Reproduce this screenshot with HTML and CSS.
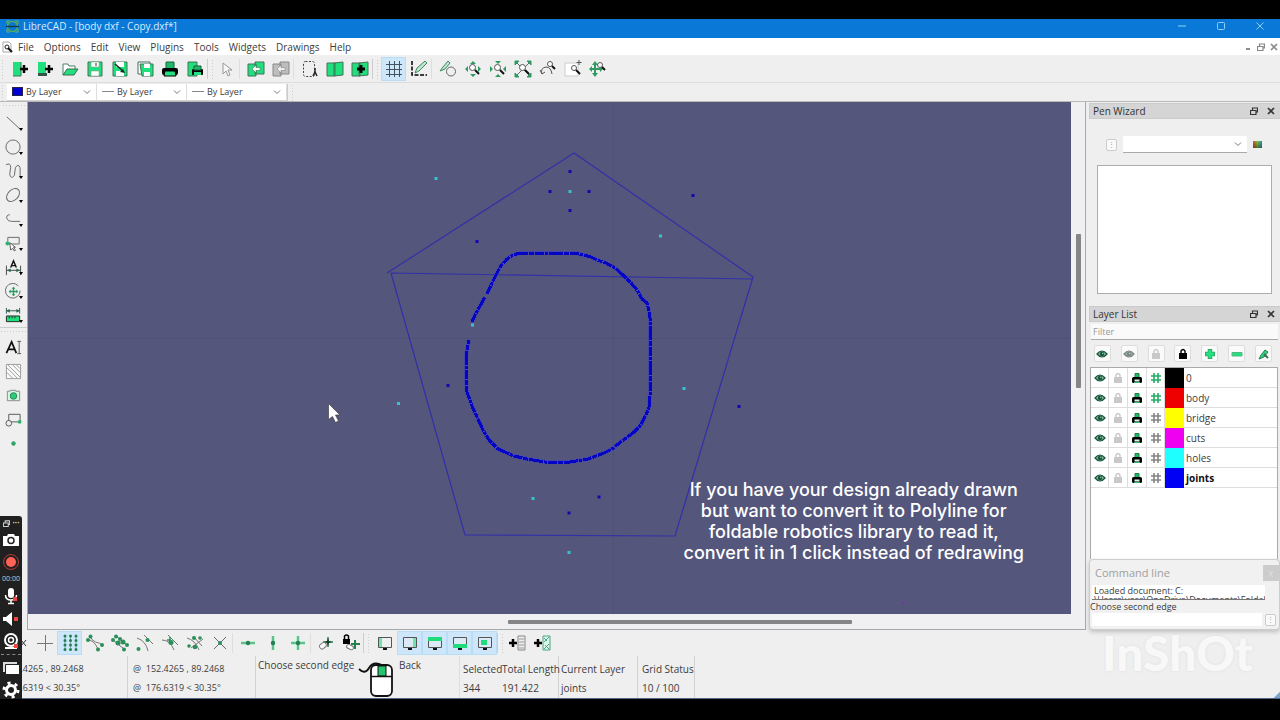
FILE: index.html
```html
<!DOCTYPE html>
<html lang="en">
<head>
<meta charset="utf-8">
<title>LibreCAD - [body dxf - Copy.dxf*]</title>
<link rel="stylesheet" href="styles.css">
</head>
<body>
<svg class="sprites" aria-hidden="true">
  <defs>
    <symbol id="new" viewBox="0 0 18 18"><path d="M2 2h8v14H2z" fill="#1fe07c"/><path d="M10 2v14H2" fill="none" stroke="#47705a"/><path d="M9 9h8M13 5v8" stroke="#000" stroke-width="2.500"/></symbol>
    <symbol id="newt" viewBox="0 0 18 18"><path d="M2 2h8v14H2z" fill="#1fe07c"/><path d="M2 13h9v3H2z" fill="#35544a"/><path d="M9 9h8M13 5v8" stroke="#000" stroke-width="2.500"/></symbol>
    <symbol id="open" viewBox="0 0 18 18"><path d="M2 15V4h5l1 2h6v3" fill="#fff" stroke="#4f7f67"/><path d="M2 15l4-6h11l-4 6z" fill="#1fe07c" stroke="#3c6a53"/></symbol>
    <symbol id="save" viewBox="0 0 18 18"><path d="M2 2h14v14H2z" fill="#1fe07c" stroke="#47705a"/><path d="M5 2h8v5H5zM5 11h8v5H5z" fill="#fff" stroke="#7fa893" stroke-width=".6"/><path d="M10 3v3" stroke="#333"/></symbol>
    <symbol id="saveas" viewBox="0 0 18 18"><path d="M2 2h14v14H2z" fill="#1fe07c" stroke="#47705a"/><path d="M5 2h8v5H5zM5 11h8v5H5z" fill="#fff"/><path d="M4 4l8 7" stroke="#222" stroke-width="1.500"/><path d="M12 9l2 4-5-1z" fill="#222"/></symbol>
    <symbol id="saveall" viewBox="0 0 18 18"><path d="M2 2h12v12H2z" fill="#fff" stroke="#47705a"/><path d="M4 4h13v12H6z" fill="#1fe07c" stroke="#47705a"/><path d="M8 4h6v4H8zM8 12h6v4H8z" fill="#fff"/></symbol>
    <symbol id="print" viewBox="0 0 18 18"><path d="M5 2h8v7H5z" fill="#1fb868" stroke="#17623b"/><rect x="1" y="8" width="16" height="7" rx="2"/><path d="M4 11h10l1 5H3z" fill="#25e082" stroke="#000"/></symbol>
    <symbol id="preview" viewBox="0 0 18 18"><path d="M2 2h9v14H2z" fill="#1fe07c" stroke="#47705a"/><rect x="6" y="9" width="11" height="6" rx="1"/><path d="M8 6h7v4H8z" fill="#1fb868" stroke="#17623b"/><path d="M8 12h7v3H8z" fill="#25e082"/></symbol>
    <symbol id="arrow" viewBox="0 0 18 18"><path d="M5 3v11l3-3 2 5 2-1-2-5h4z" fill="#f7f7f7" stroke="#999"/></symbol>
    <symbol id="copyl" viewBox="0 0 18 18"><path d="M1 4h8v12H1zM8 2h9v12H8z" fill="#1fe07c" stroke="#47705a"/><path d="M5 9l4-4v2.500h4v3H9V13z" fill="#fff" stroke="#47705a" stroke-width=".6"/></symbol>
    <symbol id="copyg" viewBox="0 0 18 18"><path d="M1 4h8v12H1zM8 2h9v12H8z" fill="#bdbdbd" stroke="#888"/><path d="M5 9l4-4v2.500h4v3H9V13z" fill="#eee" stroke="#888" stroke-width=".6"/></symbol>
    <symbol id="cut" viewBox="0 0 18 18"><rect x="2.500" y="1.500" width="11" height="15" rx="2" fill="none" stroke="#444" stroke-dasharray="2 1.500"/><path d="M14 8v5M12 16l2-4 2 4" stroke="#222" stroke-width="1.500" fill="none"/></symbol>
    <symbol id="copy" viewBox="0 0 18 18"><path d="M1 3h8v13H1zM8 3l9-1v13l-9 1z" fill="#1fe07c" stroke="#47705a"/></symbol>
    <symbol id="paste" viewBox="0 0 18 18"><path d="M1 3h8v13H1zM8 3l9-1v13l-9 1z" fill="#1fe07c" stroke="#47705a"/><path d="M6 9h8M10 5v8" stroke="#000" stroke-width="3"/></symbol>
    <symbol id="grid" viewBox="0 0 18 18"><path d="M1 4.500h16M1 9.500h16M1 14.500h16M4.500 1v16M9.500 1v16M14.500 1v16" stroke="#43525e" fill="none"/></symbol>
    <symbol id="draft" viewBox="0 0 18 18"><path d="M2 1v14h15" fill="none" stroke="#000" stroke-width="1.500" stroke-dasharray="4 1.500"/><path d="M5 13l2-5 8-7 2 2-8 8z" fill="#bfe5cf" stroke="#3e8a62"/></symbol>
    <symbol id="redraw" viewBox="0 0 18 18"><circle cx="12" cy="11.500" r="4.500" fill="none" stroke="#666"/><path d="M1 11l3-4 5-6 2 2-5 6z" fill="#bfe5cf" stroke="#3e8a62"/></symbol>
    <symbol id="glass" viewBox="0 0 18 18"><circle cx="8.500" cy="7.500" r="3" fill="#fff" stroke="#555"/><path d="M11 10l4 4" stroke="#111" stroke-width="2"/></symbol>
    <symbol id="zin" viewBox="0 0 18 18"><path d="M9 1l3 3H6zM9 17l3-3H6zM1 9l3-3v6zM17 9l-3-3v6z" fill="#2d9b62"/><use href="#glass"/></symbol>
    <symbol id="zout" viewBox="0 0 18 18"><path d="M9 4l3-3H6zM9 14l3 3H6zM4 9L1 6v6zM14 9l3-3v6z" fill="#2d9b62"/><use href="#glass"/></symbol>
    <symbol id="zauto" viewBox="0 0 18 18"><path d="M3 3l12 12M15 3L3 15" stroke="#667"/><path d="M1 1h4L1 5zM17 1h-4l4 4zM1 17h4l-4-4zM17 17h-4l4-4z" fill="#2d9b62" stroke="#2d9b62"/><use href="#glass"/></symbol>
    <symbol id="zprev" viewBox="0 0 18 18"><path d="M3 14q-2-6 4-7 5 0 6 7M1 10l2 4 3-2" fill="none" stroke="#555"/><circle cx="11" cy="4" r="2.500" fill="#fff" stroke="#555"/><path d="M13 6l3 3" stroke="#111" stroke-width="2"/></symbol>
    <symbol id="zwin" viewBox="0 0 18 18"><path d="M1 3h13v13H1z" fill="#fff" stroke="#ccc"/><path d="M15 0v5M12.500 2.500h5" stroke="#555"/><circle cx="10" cy="8" r="2.500" fill="#fff" stroke="#555"/><path d="M12 10l4 4" stroke="#111" stroke-width="2"/></symbol>
    <symbol id="zpan" viewBox="0 0 18 18"><path d="M6 3v12M1 9h12" stroke="#2d9b62" stroke-width="2"/><path d="M6 1l3 4H3zM6 17l3-4H3zM0 9l3-3v6zM14 9l-3-3v6z" fill="#2d9b62"/><circle cx="11" cy="5" r="2.500" fill="#fff" stroke="#555"/><path d="M13 7l3 3" stroke="#111" stroke-width="2"/></symbol>
    <symbol id="line" viewBox="0 0 18 18"><path d="M2 2l14 13" stroke="#666"/></symbol>
    <symbol id="circle" viewBox="0 0 18 18"><circle cx="8.500" cy="8.500" r="7.500" fill="none" stroke="#666"/></symbol>
    <symbol id="curve" viewBox="0 0 18 18"><path d="M1 2q5-3 5 3l-1 7q1 6 5 1L11 5q3-5 5 0v10" fill="none" stroke="#666"/></symbol>
    <symbol id="ellipse" viewBox="0 0 18 18"><ellipse cx="8.500" cy="8.500" rx="8" ry="5.500" transform="rotate(-45 8.500 8.500)" fill="none" stroke="#666"/></symbol>
    <symbol id="poly" viewBox="0 0 18 18"><path d="M5 4q-4 0-3 4 1 3 5 3h9" fill="none" stroke="#666"/></symbol>
    <symbol id="sel" viewBox="0 0 18 18"><path d="M3 2.500h12v7H3z" fill="none" stroke="#666"/><circle cx="2.500" cy="9" r="2" fill="#2bb26c"/><path d="M5 8l1 8 2-2 2 3 1-1-2-3h2z" fill="#fff" stroke="#555"/></symbol>
    <symbol id="dim" viewBox="0 0 18 18"><path d="M1.500 7v10M16.500 7v10M2 12h14" stroke="#444"/><path d="M2 12l4-2v4zM16 12l-4-2v4z" fill="#2b6b4b"/><path d="M6 9l3-7 3 7M7 7h4" fill="none" stroke="#111" stroke-width="1.500"/></symbol>
    <symbol id="mod" viewBox="0 0 18 18"><path d="M14 3a7.800 7.800 0 1 0 2 5" fill="none" stroke="#666"/><path d="M9 5v8M5 9h8" stroke="#2d9b62" stroke-width="1.500"/><path d="M9 4l2 2H7zM9 14l2-2H7zM4 9l2-2v4zM14 9l-2-2v4z" fill="#2d9b62"/></symbol>
    <symbol id="meas" viewBox="0 0 18 18"><path d="M1.500 1v6M15.500 1v6M2 4h13" stroke="#355"/><path d="M1 4l4-2v4zM16 4l-4-2v4z" fill="#2b6b4b"/><path d="M1.500 9.500h14v6h-14z" fill="#1fe07c" stroke="#222"/><path d="M4.500 10v2M7.500 10v2M10.500 10v2" stroke="#222"/></symbol>
    <symbol id="text" viewBox="0 0 18 18"><path d="M1.500 15L7 3l5 12M4 11h6" fill="none" stroke="#111" stroke-width="1.800"/><path d="M13 2.500h4M13 15.500h4M15 2.500v13" stroke="#555"/></symbol>
    <symbol id="hatch" viewBox="0 0 18 18"><path d="M1.500 1.500h15v15h-15z" fill="#fafafa" stroke="#999"/><path d="M2 10l6 6M2 5l11 11M3 2l13 13M8 2l8 8M12 2l4 4" stroke="#999"/></symbol>
    <symbol id="image" viewBox="0 0 18 18"><path d="M2.500 4.500h3v-1h6v1h4v10h-13z" fill="#d7f7e5" stroke="#888"/><circle cx="9" cy="9.500" r="3.500" fill="#25d079" stroke="#387b59"/></symbol>
    <symbol id="block" viewBox="0 0 18 18"><path d="M4 3.500h12v8H4z" fill="none" stroke="#555"/><circle cx="4" cy="13" r="3" fill="#eee" stroke="#555"/><circle cx="15.500" cy="11.500" r="2" fill="#2bb26c"/></symbol>
    <symbol id="point" viewBox="0 0 18 18"><circle cx="9" cy="9" r="2" fill="#2bb26c" stroke="#387b59" stroke-width=".6"/></symbol>
    <symbol id="x" viewBox="0 0 18 18"><path d="M10 6l5 6M15 6l-5 6" stroke="#333"/></symbol>
    <symbol id="free" viewBox="0 0 18 18"><path d="M1 9.500h16M9.500 1v16" stroke="#777"/></symbol>
    <symbol id="sgrid" viewBox="0 0 18 18"><g fill="none" stroke="#257f53" stroke-width="3" stroke-dasharray="0 4.500" stroke-linecap="round"><path d="M4 2v14M9.500 2v14M15 2v14"/></g><path d="M4 2v14M9.500 2v14M15 2v14" stroke="#257f53" stroke-width=".5"/></symbol>
    <symbol id="send" viewBox="0 0 18 18"><path d="M4.500 2.500q1 4 5 5.500 5 1 6.500 3M2 6q6 0 10 9" stroke="#777" fill="none"/><g fill="#2b8f5a"><circle cx="4.500" cy="2.500" r="2"/><circle cx="2" cy="6" r="2"/><circle cx="16" cy="11" r="2"/><circle cx="12" cy="15.500" r="2"/></g></symbol>
    <symbol id="sent" viewBox="0 0 18 18"><path d="M2 6l11 9M5 2l11 9" stroke="#667" fill="none"/><g fill="#2b8f5a"><circle cx="5" cy="2.500" r="2"/><circle cx="2" cy="6" r="2"/><circle cx="9" cy="5" r="2"/><circle cx="7" cy="9" r="2.500"/><circle cx="12" cy="8" r="2.500"/><circle cx="16" cy="11" r="2"/><circle cx="13" cy="15.500" r="2"/></g></symbol>
    <symbol id="scen" viewBox="0 0 18 18"><path d="M1 4q9 3 11 13M8 1l9 9" stroke="#777" fill="none"/><circle cx="11.500" cy="6" r="2" fill="#2b8f5a"/><circle cx="2.500" cy="15" r="2" fill="#2b8f5a"/></symbol>
    <symbol id="smid" viewBox="0 0 18 18"><path d="M1 6q8 0 12 10M7 1l10 10" stroke="#777" fill="none"/><circle cx="10" cy="8.500" r="2.500" fill="#2b8f5a"/><path d="M9 3v4M6 6h4" stroke="#2b8f5a" stroke-width="1.500"/></symbol>
    <symbol id="sdist" viewBox="0 0 18 18"><path d="M1 4q8 2 12 12M5 14L17 5M7 2l9 10" stroke="#777" fill="none"/><g fill="#2b8f5a"><circle cx="8" cy="4" r="2"/><circle cx="14" cy="4" r="1.800"/><circle cx="3" cy="12" r="1.800"/><circle cx="9" cy="13" r="2.300"/></g></symbol>
    <symbol id="sint" viewBox="0 0 18 18"><path d="M3 3l12 12M15 3L3 15" stroke="#667"/><circle cx="9" cy="9" r="2" fill="#2b8f5a"/></symbol>
    <symbol id="rh" viewBox="0 0 18 18"><path d="M2 9h14" stroke="#b4f3cf" stroke-width="4"/><path d="M2 9h14" stroke="#257f53"/><circle cx="9" cy="9" r="2.200" fill="#257f53"/></symbol>
    <symbol id="rv" viewBox="0 0 18 18"><path d="M9 2v14" stroke="#b4f3cf" stroke-width="4"/><path d="M9 2v14" stroke="#257f53"/><circle cx="9" cy="9" r="2.200" fill="#257f53"/></symbol>
    <symbol id="ro" viewBox="0 0 18 18"><path d="M9 2v14M2 9h14" stroke="#b4f3cf" stroke-width="4"/><path d="M9 2v14M2 9h14" stroke="#257f53"/><circle cx="9" cy="9" r="2.200" fill="#257f53"/></symbol>
    <symbol id="rel" viewBox="0 0 18 18"><path d="M11 3v10M6 8h10" stroke="#257f53" stroke-width="1.500"/><path d="M11 4l1 3 3 1-3 1-1 3-1-3-3-1 3-1z" fill="#173f2b"/><rect x="2" y="9" width="7" height="5" rx="2" transform="rotate(-38 6 11)" fill="#fff" stroke="#777"/></symbol>
    <symbol id="rlock" viewBox="0 0 18 18"><path d="M1 5h7v5H1z"/><path d="M2.500 5V2q2-2 4 0v3" fill="none" stroke="#000" stroke-width="1.500"/><path d="M13 6v9M9 10h9" stroke="#257f53" stroke-width="2"/><rect x="5" y="11" width="7" height="4" rx="2" transform="rotate(25 8 12)" fill="#fff" stroke="#777"/></symbol>
    <symbol id="mon" viewBox="0 0 18 18"><path d="M2.500 3.500h13v10h-13z" fill="#f0f0f0" fill-opacity=".4" stroke="#555"/><path d="M7 14h4v2H7z" fill="#111"/></symbol>
    <symbol id="list" viewBox="0 0 18 18"><path d="M10 2h7v14h-7z" fill="#eee" stroke="#888"/><path d="M11 5h5M11 8h5M11 11h5M11 14h5" stroke="#999"/><path d="M1 9h8M5 5v8" stroke="#000" stroke-width="2.500"/></symbol>
    <symbol id="list2" viewBox="0 0 18 18"><path d="M10 2h7v14h-7z" fill="#d9f8e7" stroke="#55a07a"/><path d="M11 8l5-5M11 15l5-5M11 4l3 3M12 11l4 4" stroke="#4a9" fill="none"/><path d="M1 9h8M5 5v8" stroke="#000" stroke-width="2.500"/></symbol>
    <symbol id="eye" viewBox="0 0 12 12"><path d="M1 6q5-6 10 0-5 6-10 0z" fill="#7fb79a" stroke="currentColor" stroke-width="1.200"/><circle cx="6" cy="6" r="2.200" fill="currentColor"/><circle cx="6.800" cy="5.300" r=".6" fill="#dfe"/></symbol>
    <symbol id="lock" viewBox="0 0 12 12"><path d="M2 5h8v6H2z" fill="currentColor"/><path d="M4 5V3q2-3 4 0v2" fill="none" stroke="currentColor" stroke-width="1.400"/></symbol>
    <symbol id="lprint" viewBox="0 0 12 12"><path d="M4 1.500h4V6H4z" fill="#1fb868" stroke="#17833f"/><rect x="1" y="5" width="10" height="6" rx="1.500"/><path d="M3.500 7.500h5v2h-5z" fill="#d9f5e5"/><path d="M3 10h6v1H3z" fill="#25c070"/></symbol>
    <symbol id="hash" viewBox="0 0 12 12"><path d="M4 1v10M8 1v10M1 4h10M1 8h10" stroke="currentColor" stroke-width="1.600"/></symbol>
    <symbol id="plus" viewBox="0 0 12 12"><path d="M6 1v10M1 6h10" stroke="#2fa566" stroke-width="4.500"/><path d="M6 2v8M2 6h8" stroke="#25e082" stroke-width="3"/></symbol>
    <symbol id="minus" viewBox="0 0 12 12"><path d="M1 4.500h10v3.500H1z" fill="#25e082" stroke="#55b884"/></symbol>
    <symbol id="edit" viewBox="0 0 12 12"><path d="M1 11l2-4 4-5 3 2-4 5z" fill="#2fd07e" stroke="#2b7f53"/><path d="M6 6l4 4" stroke="#3b6e53" stroke-width="2"/></symbol>
    <symbol id="chev" viewBox="0 0 8 8"><path d="M1 2.500l3 3 3-3" fill="none" stroke="#777"/></symbol>
    <symbol id="restore" viewBox="0 0 8 8"><path d="M2.500 3V1h5v4H6M.5 3.500H6v4H.5z" fill="none" stroke="currentColor" stroke-width="1.200"/></symbol>
    <symbol id="close" viewBox="0 0 8 8"><path d="M1 1l6 6M7 1L1 7" stroke="currentColor" stroke-width="1.700"/></symbol>
  </defs>
</svg>

<div class="window">
  <header class="titlebar">
    <svg class="logo" viewBox="0 0 14 14"><circle cx="7" cy="7" r="5.500" fill="none" stroke="#5fae4c" stroke-width="1.500"/><path d="M0 7h14" stroke="#143d3a" stroke-width="1.500"/><path d="M1 4V1h3M10 1h3v3M1 10v3h3M10 13h3v-3" stroke="#74bd5a" fill="none"/></svg>
    <h1>LibreCAD - [body dxf - Copy.dxf*]</h1>
    <div class="winctl">
      <button aria-label="Minimize"><svg viewBox="0 0 10 10"><path d="M1 5h8"/></svg></button>
      <button aria-label="Maximize"><svg viewBox="0 0 10 10"><rect x="1.500" y="1.500" width="7" height="7" rx="1"/></svg></button>
      <button aria-label="Close"><svg viewBox="0 0 10 10"><path d="M1.500 1.500l7 7M8.500 1.500l-7 7"/></svg></button>
    </div>
  </header>

  <nav class="menubar">
    <svg class="doc" viewBox="0 0 12 12"><path d="M1 1h6l2 2v8H1z" fill="#fff" stroke="#aaa"/><circle cx="5" cy="6" r="2" fill="none" stroke="#222"/><path d="M6 7l4 4" stroke="#111" stroke-width="2"/></svg>
    <button>File</button><button>Options</button><button>Edit</button><button>View</button><button>Plugins</button><button>Tools</button><button>Widgets</button><button>Drawings</button><button>Help</button>
    <div class="docctl">
      <button aria-label="Minimize drawing"><svg viewBox="0 0 8 8"><path d="M2 6h4" stroke="#666" stroke-width="1.500"/></svg></button>
      <button aria-label="Restore drawing"><svg><use href="#restore"/></svg></button>
      <button aria-label="Close drawing"><svg><use href="#close"/></svg></button>
    </div>
  </nav>

  <div class="toolbar top">
    <i class="grip"></i>
    <button aria-label="New"><svg><use href="#new"/></svg></button>
    <button aria-label="New from template"><svg><use href="#newt"/></svg></button>
    <button aria-label="Open"><svg><use href="#open"/></svg></button>
    <button aria-label="Save"><svg><use href="#save"/></svg></button>
    <button aria-label="Save as"><svg><use href="#saveas"/></svg></button>
    <button aria-label="Save all"><svg><use href="#saveall"/></svg></button>
    <button aria-label="Print"><svg><use href="#print"/></svg></button>
    <button aria-label="Print preview"><svg><use href="#preview"/></svg></button>
    <i class="grip edge"></i>
    <button aria-label="Select"><svg><use href="#arrow"/></svg></button>
    <i class="sep"></i>
    <button aria-label="Undo"><svg><use href="#copyl"/></svg></button>
    <button aria-label="Redo"><svg><use href="#copyg"/></svg></button>
    <i class="sep"></i>
    <button aria-label="Cut"><svg><use href="#cut"/></svg></button>
    <button aria-label="Copy"><svg><use href="#copy"/></svg></button>
    <button aria-label="Paste"><svg><use href="#paste"/></svg></button>
    <i class="grip wide edge"></i>
    <button class="on" aria-label="Grid"><svg><use href="#grid"/></svg></button>
    <button aria-label="Draft"><svg><use href="#draft"/></svg></button>
    <i class="sep"></i>
    <button aria-label="Redraw"><svg><use href="#redraw"/></svg></button>
    <button aria-label="Zoom in"><svg><use href="#zin"/></svg></button>
    <button aria-label="Zoom out"><svg><use href="#zout"/></svg></button>
    <button aria-label="Auto zoom"><svg><use href="#zauto"/></svg></button>
    <button aria-label="Previous view"><svg><use href="#zprev"/></svg></button>
    <button aria-label="Window zoom"><svg><use href="#zwin"/></svg></button>
    <button aria-label="Zoom panning"><svg><use href="#zpan"/></svg></button>
  </div>

  <div class="penbar">
    <i class="grip"></i>
    <div class="combo"><i class="swatch"></i><select aria-label="Line color"><option>By Layer</option></select><svg><use href="#chev"/></svg></div>
    <div class="combo"><i class="rule"></i><select aria-label="Line width"><option>By Layer</option></select><svg><use href="#chev"/></svg></div>
    <div class="combo last"><i class="rule"></i><select aria-label="Line type"><option>By Layer</option></select><svg><use href="#chev"/></svg></div>
    <i class="grip edge"></i>
  </div>

  <main class="work">
    <div class="sidebar">
      <i class="hgrip"></i>
      <button class="more" aria-label="Line"><svg><use href="#line"/></svg></button>
      <button class="more" aria-label="Circle"><svg><use href="#circle"/></svg></button>
      <button class="more" aria-label="Curve"><svg><use href="#curve"/></svg></button>
      <button class="more" aria-label="Ellipse"><svg><use href="#ellipse"/></svg></button>
      <button class="more" aria-label="Polyline"><svg><use href="#poly"/></svg></button>
      <button class="more" aria-label="Select tools"><svg><use href="#sel"/></svg></button>
      <button class="more" aria-label="Dimension"><svg><use href="#dim"/></svg></button>
      <button class="more" aria-label="Modify"><svg><use href="#mod"/></svg></button>
      <button class="more" aria-label="Info"><svg><use href="#meas"/></svg></button>
      <i class="hgrip second"></i>
      <button aria-label="Text"><svg><use href="#text"/></svg></button>
      <button aria-label="Hatch"><svg><use href="#hatch"/></svg></button>
      <button aria-label="Image"><svg><use href="#image"/></svg></button>
      <button aria-label="Block"><svg><use href="#block"/></svg></button>
      <button aria-label="Point"><svg><use href="#point"/></svg></button>
    </div>

    <section class="viewport">
      <div class="canvas">
        <svg class="drawing" viewBox="28 102 1043 512" preserveAspectRatio="xMidYMid slice">
          <defs><path id="ring" d="M472 322L475 315L485 297M487 294L493 281L500 267L507 259L513 255L520 253H575L584 255L591 257L597 260L606 263L615 268L623 275L631 283L637 290L642 299L647 303L649 311L650 318V395L649 407L646 415L640 426L633 433L622 441L612 449L604 453L588 459L570 462H545L527 459L514 456L498 449L489 440L483 430L477 417L472 406L467 392L466 380V355L469 340"/></defs>
          <path d="M613.500 102v512M28 338.500h1043" stroke="#505178" fill="none"/>
          <path d="M387 273L574 153L753 277L675 536L465 535L391 273L752 279" fill="none" stroke="#3230a8" stroke-width="1.200"/>
          <use href="#ring" class="ring-glow"/>
          <use href="#ring" class="ring-dots"/>
          <path class="pt" stroke="#1108b0" d="M568.500 171.500h3M548.500 191.500h3M587.500 191.500h3M568.500 210.500h3M691.500 195.500h3M475.500 241.500h3M446.500 385.500h3M737.500 406.500h3M597.500 497h3M567.500 513h3"/>
          <path class="pt" stroke="#35c4cf" d="M434.500 178.500h3M568.500 191.500h3M659 236h3M471 325h3M397 403.500h3M682.500 388.500h3M531.500 498.500h3M567.500 552.500h3"/>
          <path d="M902 603h3" stroke="#6a3d96" stroke-width="2"/>
          <path d="M328.500 403.500v16l4-3 3 6 3-1.500-3-6h4.500z" fill="#fff" stroke="#444" stroke-width=".7"/>
        </svg>
        <p class="caption">If you have your design already drawn<br>but want to convert it to Polyline for<br>foldable robotics library to read it,<br>convert it in 1 click instead of redrawing</p>
      </div>
      <div class="vscroll"><i></i></div>
      <div class="hscroll"><i></i></div>
    </section>

    <aside class="docks">
      <section class="dock">
        <h2><span>Pen Wizard</span><button aria-label="Float Pen Wizard"><svg><use href="#restore"/></svg></button><button aria-label="Close Pen Wizard"><svg><use href="#close"/></svg></button></h2>
        <div class="penrow">
          <button class="mini" aria-label="Pick color">⋮</button>
          <div class="combo"><select aria-label="Favorite color"><option></option></select><svg><use href="#chev"/></svg></div>
          <button class="rainbow" aria-label="Color dialog"></button>
        </div>
        <div class="penlist"></div>
      </section>
      <section class="dock layers">
        <h2><span>Layer List</span><button aria-label="Float Layer List"><svg><use href="#restore"/></svg></button><button aria-label="Close Layer List"><svg><use href="#close"/></svg></button></h2>
        <input class="filter" type="text" placeholder="Filter" aria-label="Filter">
        <div class="layerbtns">
          <button class="c-eye" aria-label="Show all"><svg><use href="#eye"/></svg></button>
          <button class="c-grey" aria-label="Hide all"><svg><use href="#eye"/></svg></button>
          <button class="c-pale" aria-label="Unlock all"><svg><use href="#lock"/></svg></button>
          <button aria-label="Lock all"><svg><use href="#lock"/></svg></button>
          <button aria-label="Add layer"><svg><use href="#plus"/></svg></button>
          <button aria-label="Remove layer"><svg><use href="#minus"/></svg></button>
          <button aria-label="Edit layer"><svg><use href="#edit"/></svg></button>
        </div>
        <div class="tablebox">
          <table>
            <tr><td class="c-eye"><svg><use href="#eye"/></svg></td><td class="c-pale"><svg><use href="#lock"/></svg></td><td><svg><use href="#lprint"/></svg></td><td class="c-green"><svg><use href="#hash"/></svg></td><td class="black"></td><td class="name">0</td></tr>
            <tr><td class="c-eye"><svg><use href="#eye"/></svg></td><td class="c-pale"><svg><use href="#lock"/></svg></td><td><svg><use href="#lprint"/></svg></td><td class="c-green"><svg><use href="#hash"/></svg></td><td class="red"></td><td class="name">body</td></tr>
            <tr><td class="c-eye"><svg><use href="#eye"/></svg></td><td class="c-pale"><svg><use href="#lock"/></svg></td><td><svg><use href="#lprint"/></svg></td><td class="c-grey"><svg><use href="#hash"/></svg></td><td class="yellow"></td><td class="name">bridge</td></tr>
            <tr><td class="c-eye"><svg><use href="#eye"/></svg></td><td class="c-pale"><svg><use href="#lock"/></svg></td><td><svg><use href="#lprint"/></svg></td><td class="c-grey"><svg><use href="#hash"/></svg></td><td class="magenta"></td><td class="name">cuts</td></tr>
            <tr><td class="c-eye"><svg><use href="#eye"/></svg></td><td class="c-pale"><svg><use href="#lock"/></svg></td><td><svg><use href="#lprint"/></svg></td><td class="c-grey"><svg><use href="#hash"/></svg></td><td class="cyan"></td><td class="name">holes</td></tr>
            <tr><td class="c-eye"><svg><use href="#eye"/></svg></td><td class="c-pale"><svg><use href="#lock"/></svg></td><td><svg><use href="#lprint"/></svg></td><td class="c-grey"><svg><use href="#hash"/></svg></td><td class="blue"></td><td class="name current">joints</td></tr>
          </table>
        </div>
      </section>
      <section class="command">
        <div class="cmdhead"><span>Command line</span><button aria-label="Close command line">x</button></div>
        <div class="cmdlog">Loaded document: C:<br>\Users\user\OneDrive\Documents\Foldable</div>
        <label for="cmd">Choose second edge</label>
        <div class="cmdrow"><input id="cmd" type="text"><button class="mini" aria-label="Options">⋮</button></div>
      </section>
    </aside>
  </main>

  <div class="toolbar snap">
    <i class="grip"></i>
    <button aria-label="Exclusive snap"><svg><use href="#x"/></svg></button>
    <button aria-label="Free snap"><svg><use href="#free"/></svg></button>
    <button class="on" aria-label="Snap on grid"><svg><use href="#sgrid"/></svg></button>
    <button aria-label="Snap on endpoints"><svg><use href="#send"/></svg></button>
    <button aria-label="Snap on entity"><svg><use href="#sent"/></svg></button>
    <button aria-label="Snap center"><svg><use href="#scen"/></svg></button>
    <button aria-label="Snap middle"><svg><use href="#smid"/></svg></button>
    <button aria-label="Snap distance"><svg><use href="#sdist"/></svg></button>
    <button aria-label="Snap intersection"><svg><use href="#sint"/></svg></button>
    <i class="sep"></i>
    <button aria-label="Restrict horizontal"><svg><use href="#rh"/></svg></button>
    <button aria-label="Restrict vertical"><svg><use href="#rv"/></svg></button>
    <button aria-label="Restrict orthogonal"><svg><use href="#ro"/></svg></button>
    <i class="sep"></i>
    <button aria-label="Set relative zero"><svg><use href="#rel"/></svg></button>
    <button aria-label="Lock relative zero"><svg><use href="#rlock"/></svg></button>
    <i class="grip wide edge"></i>
    <button aria-label="Left dock"><svg viewBox="0 0 18 18"><path d="M2 3h4v10H2z" fill="#1fdc7a"/><use href="#mon"/></svg></button>
    <button class="on" aria-label="Right dock"><svg viewBox="0 0 18 18"><path d="M12 3h4v10h-4z" fill="#1fdc7a"/><use href="#mon"/></svg></button>
    <button class="on" aria-label="Top dock"><svg viewBox="0 0 18 18"><use href="#mon"/><path d="M2 3h14v4H2z" fill="#1fdc7a"/></svg></button>
    <button class="on" aria-label="Bottom dock"><svg viewBox="0 0 18 18"><use href="#mon"/><path d="M2 10h14v4H2z" fill="#1fdc7a"/></svg></button>
    <button class="on" aria-label="Floating dock"><svg viewBox="0 0 18 18"><use href="#mon"/><path d="M5 6h6v5H5z" fill="#1fdc7a"/></svg></button>
    <i class="grip edge"></i>
    <button aria-label="Add toolbar"><svg><use href="#list"/></svg></button>
    <button aria-label="Add menu"><svg><use href="#list2"/></svg></button>
  </div>

  <footer class="status">
    <div class="cell coord"><span>152.4265 , 89.2468</span><span>176.6319 &lt; 30.35°</span></div>
    <div class="cell coord"><span>@&nbsp; 152.4265 , 89.2468</span><span>@&nbsp; 176.6319 &lt; 30.35°</span></div>
    <div class="mouse">
      <span class="left">Choose second edge</span>
      <svg viewBox="0 0 36 40"><path d="M1 11q6 6 10-1t13-3v4" fill="none" stroke="#111" stroke-width="1.800"/><rect x="13" y="7" width="21" height="31" rx="5" fill="#fff" stroke="#111" stroke-width="1.800"/><path d="M20 8h8v10h-8z" fill="#25c46f" stroke="#111"/><path d="M13 18.500h21" stroke="#111" stroke-width="1.500"/></svg>
      <span>Back</span>
    </div>
    <div class="cell selc"><span>Selected</span><span>344</span></div>
    <div class="cell lenc"><span>Total Length</span><span>191.422</span></div>
    <div class="cell layc"><span>Current Layer</span><span>joints</span></div>
    <div class="cell gridc"><span>Grid Status</span><span>10 / 100</span></div>
  </footer>

  <div class="recorder">
    <div class="rtop"><svg viewBox="0 0 8 8"><use href="#restore"/></svg><b>···</b></div>
    <button aria-label="Screenshot"><svg viewBox="0 0 18 18"><path d="M1 5h4l1-2h6l1 2h4v10H1z" fill="#fff"/><circle cx="9" cy="9.500" r="3" fill="#fff" stroke="#222" stroke-width="1.500"/></svg></button>
    <button aria-label="Stop recording"><svg viewBox="0 0 18 18"><circle cx="9" cy="9" r="7.500" fill="none" stroke="#b33a35"/><circle cx="9" cy="9" r="5" fill="#ff6257"/></svg></button>
    <time>00:00</time>
    <button aria-label="Microphone"><svg viewBox="0 0 18 18"><rect x="6" y="1" width="6" height="10" rx="3" fill="#fff"/><path d="M3.500 8q0 5 5.500 5t5.500-5M9 13v3M6 16.500h6" fill="none" stroke="#fff" stroke-width="1.500"/><path d="M11 10h4v4h-4z" fill="#e44"/></svg></button>
    <button aria-label="Sound"><svg viewBox="0 0 18 18"><path d="M1 7h3l6-5v14l-6-5H1z" fill="#fff"/><path d="M12 7h4v4h-4z" fill="#e44"/></svg></button>
    <button aria-label="Webcam"><svg viewBox="0 0 18 18"><circle cx="9" cy="8" r="6" fill="none" stroke="#fff" stroke-width="2"/><circle cx="9" cy="8" r="2.500" fill="none" stroke="#fff" stroke-width="1.500"/><path d="M3 16h12" stroke="#fff" stroke-width="2"/><path d="M12 12h4v4h-4z" fill="#e44"/></svg></button>
    <hr>
    <button aria-label="Windows"><svg viewBox="0 0 18 18"><path d="M1 3h14v10H1z" fill="#ddd"/><path d="M3.500 5.500h14v10h-14z" fill="#fff" stroke="#222"/></svg></button>
    <button aria-label="Settings"><svg viewBox="0 0 18 18"><circle cx="9" cy="9" r="4.500" fill="none" stroke="#fff" stroke-width="3"/><circle cx="9" cy="9" r="7" fill="none" stroke="#fff" stroke-width="3" stroke-dasharray="3 4.330"/></svg></button>
  </div>
  <div class="watermark">InShOt</div>
  <svg class="resize" viewBox="0 0 10 10"><path d="M10 3v7H3z" fill="#7ba4cc"/></svg>
</div>
</body>
</html>
```
FILE: styles.css
```css
* { box-sizing: border-box; }
body {
  margin: 0;
  height: 100vh;
  padding: 19px 0 21px;
  background: #000;
  color: #3c3c3c;
  font: 10px/14px "Open Sans", "Noto Sans", sans-serif;
  overflow: hidden;
}
button {
  padding: 0;
  border: 0;
  background: none;
  color: inherit;
  font: inherit;
  display: flex;
  align-items: center;
  justify-content: center;
}
select, input { font: inherit; color: inherit; border: 0; padding: 0; min-width: 0; outline: none; }
select { appearance: none; background: none; flex: 1; }
h1, h2, p { margin: 0; font-size: 10px; font-weight: 400; }
i { display: block; flex: none; }
svg { display: block; flex: none; }
.sprites { position: absolute; width: 0; height: 0; }

.window {
  position: relative;
  height: 100%;
  display: flex;
  flex-direction: column;
  background: #efefef;
  border-bottom: 1px solid #52678a;
}

.titlebar {
  display: flex;
  align-items: center;
  height: 19px;
  padding: 0 4px 5px 6px;
  gap: 4px;
  background: #0a78d7;
  color: #d7ebfb;
}
.logo { width: 13px; height: 13px; }
.titlebar h1 { flex: 1; }
.winctl { display: flex; }
.winctl button { width: 39px; }
.winctl button:last-child { width: 36px; padding-left: 4px; }
.winctl svg { width: 10px; height: 10px; fill: none; stroke: #8fd0fa; stroke-width: 1; }

.menubar {
  display: flex;
  align-items: center;
  height: 17px;
  padding: 0 2px;
  background: #fff;
}
.doc { width: 12px; height: 12px; margin-right: 4px; }
.menubar > button { margin-right: 10px; }
.docctl { display: flex; gap: 5px; margin-left: auto; }
.docctl svg { width: 8px; height: 8px; color: #888; }

.toolbar { display: flex; align-items: center; height: 26px; flex: none; }
.toolbar.top { height: 28px; border-bottom: 1px solid #dcdcdc; }
.toolbar button { width: 25px; height: 24px; flex: none; }
.toolbar button svg { width: 18px; height: 18px; }
.toolbar button.on { background: #cde6fa; border: 1px solid #b9dcf7; }
.grip {
  width: 7px;
  height: 20px;
  background: radial-gradient(circle, #ccc 1px, transparent 1px) 1px 0 / 3px 3px repeat-y;
}
.grip.wide { width: 9px; }
.grip.edge { border-left: 1px solid #ccc; background-position: 3px 0; }
.sep { width: 4px; height: 20px; border-left: 1px solid #dedede; }
.snap .sep { width: 3px; }

.penbar { display: flex; align-items: center; height: 19px; flex: none; border-bottom: 1px solid #b8b8b8; }
.combo {
  display: flex;
  align-items: center;
  gap: 3px;
  width: 90px;
  height: 17px;
  padding: 0 5px;
  background: #fff;
  border-right: 1px solid #ddd;
  border-bottom: 1px solid #d2d2d2;
}
.penbar select { font-size: 9px; line-height: 14px; }
.penbar .grip { height: 17px; }
.combo.last { width: 100px; }
.combo svg { width: 8px; height: 8px; }
.swatch { width: 11px; height: 9px; background: #0000d0; border: 1px solid #225; }
.rule { width: 12px; height: 1px; background: #888; }

.work { display: flex; flex: 1; min-height: 0; }
.sidebar { width: 27px; flex: none; }
.sidebar button { position: relative; width: 27px; height: 24px; }
.sidebar svg { width: 17px; height: 17px; }
.more::after {
  content: "";
  position: absolute;
  right: 4px;
  bottom: 4px;
  border: 2px solid transparent;
  border-top: 3px solid #000;
  border-bottom: 0;
}
.hgrip {
  height: 9px;
  margin: 0 2px;
  background: radial-gradient(circle, #ccc 1px, transparent 1px) 0 2px / 3px 3px repeat-x;
}
.hgrip.second { height: 8px; margin: 0; border-top: 1px solid #ccc; }

.viewport {
  flex: 1;
  min-width: 0;
  display: grid;
  grid-template: 1fr 15px / 1fr 14px;
  border: 1px solid #a5a9ad;
  border-top: 0;
  background: #f0f0f2;
}
.canvas { position: relative; background: #54567c; min-height: 0; overflow: hidden; }
.drawing { width: 100%; height: 100%; }
.pt { fill: none; stroke-width: 3; }
.ring-glow { fill: none; stroke: #3b36dd; stroke-width: 4; opacity: .5; }
.ring-dots { fill: none; stroke: #0404c4; stroke-width: 3; stroke-dasharray: 9 1 3 1 14 1 5 1; shape-rendering: crispEdges; }
.caption {
  position: absolute;
  right: 47px;
  bottom: 51px;
  color: #fff;
  text-align: center;
  font: 500 18px/21px Inter, sans-serif;
}
.vscroll { display: flex; justify-content: center; }
.vscroll i { width: 5px; height: 30%; margin-top: 132px; background: #858585; border-radius: 1px; }
.hscroll { display: flex; padding-top: 6px; }
.hscroll i { width: 33%; height: 4px; margin-left: 46%; background: #858585; border-radius: 1px; }

.docks { width: 194px; flex: none; display: flex; flex-direction: column; padding-left: 3px; }
.dock h2 {
  display: flex;
  align-items: center;
  gap: 9px;
  height: 16px;
  margin-top: 1px;
  padding: 0 5px 0 3px;
  background: #d5d5d5;
  border: 1px solid #cbcbcb;
  border-right: 0;
  color: #333;
}
.dock h2 span { flex: 1; }
.dock h2 svg { width: 8px; height: 8px; }
.penrow { display: flex; align-items: center; gap: 6px; padding: 17px 18px 0 17px; }
.penrow .combo { flex: 1; height: 17px; border-right: 0; border-bottom-color: #aaa; }
.mini { width: 11px; height: 12px; background: #fafafa; border: 1px solid #ccc; border-radius: 2px; color: #999; font-size: 7px; line-height: 8px; }
.rainbow { width: 9px; height: 7px; background: linear-gradient(#0000, #0006), linear-gradient(90deg, #e44, #7c3 50%, #38d); }
.penlist { height: 129px; margin: 12px 8px 11px; background: #fff; border: 1px solid #adadad; }

.layers { flex: 1; min-height: 0; display: flex; flex-direction: column; }
.filter { height: 16px; margin: 2px 2px 0; padding: 0 2px; background: #fafafa; border-bottom: 1px solid #a8a8a8; font-size: 9px; }
.filter::placeholder { color: #999; opacity: 1; }
.layerbtns { display: grid; grid-template-columns: repeat(7, 1fr); justify-items: center; padding: 5px 3px 5px 0; }
.layerbtns button { width: 17px; height: 17px; background: #fafafa; border: 1px solid #ddd; border-radius: 2px; color: #000; }
.layerbtns svg { width: 12px; height: 12px; }
.layerbtns .c-eye, .c-eye { color: #17563a; }
.layerbtns .c-grey, .c-grey { color: #858585; }
.layerbtns .c-pale, .c-pale { color: #c9c9c9; }
.c-green { color: #23ad66; }
.tablebox { flex: 1; margin: 0 2px 0 1px; background: #fff; border: 1px solid #aaa; border-bottom: 0; overflow: hidden; }
table { width: 100%; border-spacing: 0; table-layout: fixed; }
td { width: 19px; height: 20px; padding: 0; border-right: 1px solid #ddd; border-bottom: 1px solid #ddd; }
td:first-child, td:nth-child(4) { width: 18px; }
td svg { width: 12px; height: 12px; margin: auto; }
td.name { width: auto; padding-left: 2px; border-right: 0; }
td.current { font-weight: 700; color: #111; }
td:nth-child(5) { border: 0; }
.black { background: #000; }
.red { background: #ee0000; }
.yellow { background: #ffff00; }
.magenta { background: #f000f0; }
.cyan { background: #1effff; }
.blue { background: #0000f5; }

.command {
  display: flex;
  flex-direction: column;
  height: 71px;
  padding-bottom: 2px;
  background: #f1f1f1;
  border: 1px solid #ccc;
  border-radius: 4px;
  box-shadow: 0 2px 4px #0003;
  font-size: 9px;
  line-height: 13px;
}
.cmdhead { display: flex; align-items: center; justify-content: space-between; height: 25px; padding-left: 5px; color: #a0a0a0; font-size: 11px; }
.cmdhead button { width: 16px; height: 16px; background: #ccc; color: #ddd; }
.cmdlog { height: 15px; margin: 0 14px 0 2px; padding: 1px 0 0 2px; background: #fff; border-bottom: 1px solid #777; overflow: hidden; white-space: nowrap; line-height: 9px; }
.cmdrow { display: flex; align-items: center; gap: 3px; padding: 0 3px 0 2px; }
.cmdrow input { flex: 1; height: 13px; background: #fff; }

.status { display: flex; height: 42px; flex: none; white-space: nowrap; }
.cell { display: flex; flex-direction: column; gap: 5px; padding: 6px 0 0 4px; border-right: 1px solid #d2d2d2; }
.coord { width: 128px; padding-left: 5px; font-size: 9px; }
.mouse { display: flex; width: 204px; padding: 2px 0 0 2px; border-right: 1px solid #dedede; }
.mouse .left { width: 100px; }
.mouse svg { width: 36px; height: 40px; margin-right: 5px; }
.selc { width: 42px; padding-left: 3px; border-right: 0; }
.lenc { width: 57px; padding-left: 0; }
.layc { width: 79px; padding-left: 2px; }
.gridc { width: 57px; }

.recorder {
  position: absolute;
  left: 0;
  bottom: -1px;
  width: 22px;
  height: 183px;
  display: flex;
  flex-direction: column;
  align-items: center;
  justify-content: space-between;
  padding-top: 3px;
  background: #202020;
  border-radius: 0 3px 0 0;
  color: #ccc;
  overflow: hidden;
}
.rtop { display: flex; align-items: center; gap: 3px; height: 8px; font-size: 8px; line-height: 8px; }
.rtop svg { width: 7px; height: 7px; }
.recorder button svg { width: 18px; height: 18px; }
.recorder time { font-size: 7px; line-height: 8px; }
.recorder hr { width: 20px; margin: 0; border: 0; border-top: 1px dashed #888; }
.watermark {
  position: absolute;
  right: 27px;
  bottom: 15px;
  color: #f8f8f8;
  text-shadow: 0 0 3px #ddd;
  font: 900 48px/60px Lato, sans-serif;
}
.resize { position: absolute; right: 0; bottom: 0; width: 9px; height: 9px; }
```
